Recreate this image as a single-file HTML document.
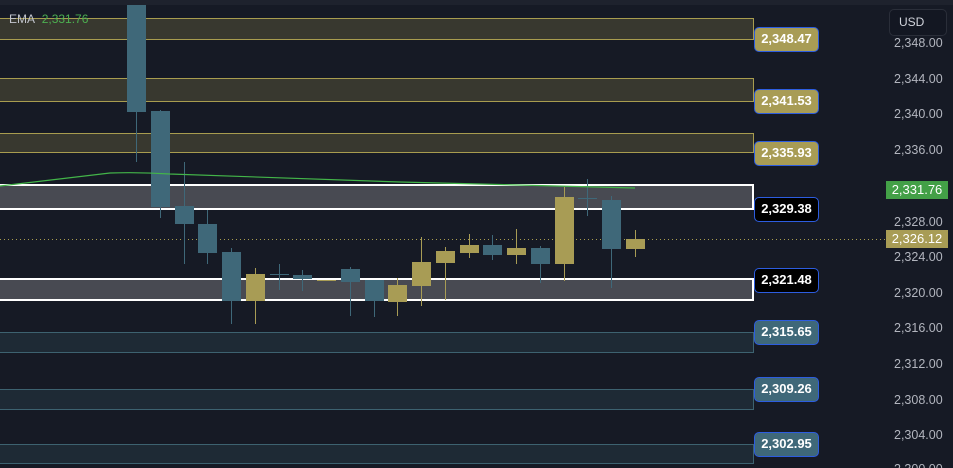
<!DOCTYPE html>
<html style="overflow:hidden;height:468px"><head><meta charset="utf-8"><style>
*{margin:0;padding:0;box-sizing:border-box}
body{width:953px;height:468px;background:#161a25;overflow:hidden;position:relative;font-family:"Liberation Sans",sans-serif}
.z{position:absolute;left:0;width:754px}
.y{background:#38382f;border-top:1px solid #a89c4f;border-bottom:1px solid #a89c4f;border-right:1px solid #a89c4f}
.g{background:#484a52;border-top:2px solid #fff;border-bottom:2px solid #fff;border-right:2px solid #fff}
.b{background:#1e2a35;border-top:1px solid #3d6270;border-bottom:1px solid #3d6270;border-right:1px solid #3d6270}
.lb{position:absolute;left:754px;width:65px;height:25px;border:1.5px solid #2d5de0;border-radius:5px;color:#fff;font-size:13px;font-weight:bold;line-height:22px;text-align:center}
.ax{position:absolute;left:894px;color:#b2b5be;font-size:12.5px}
.hl{position:absolute;left:886px;width:62px;height:18px;font-size:13px;color:#fff;line-height:18px;text-align:center}
</style></head><body>
<div style="position:absolute;left:0;top:0;width:953px;height:5px;background:#1e222d"></div>
<div class="z y" style="top:18px;height:22px"></div>
<div class="z y" style="top:78px;height:24px"></div>
<div class="z y" style="top:133px;height:20px"></div>
<div class="z g" style="top:184px;height:26px"></div>
<div class="z g" style="top:278px;height:23px"></div>
<div class="z b" style="top:332px;height:21px"></div>
<div class="z b" style="top:389px;height:21px"></div>
<div class="z b" style="top:444px;height:20px"></div>
<svg style="position:absolute;left:0;top:0" width="953" height="468">
<line x1="0" y1="239.5" x2="885" y2="239.5" stroke="#a89c4f" stroke-dasharray="1 3"/>
<g stroke-width="1">
<g fill="#3f6879" stroke="#3f6879">
<line x1="136.5" y1="5" x2="136.5" y2="162"/><rect x="127" y="5" width="19" height="107" stroke="none"/>
<line x1="160.5" y1="110" x2="160.5" y2="218"/><rect x="151" y="111" width="19" height="96" stroke="none"/>
<line x1="184.5" y1="162" x2="184.5" y2="264"/><rect x="175" y="206" width="19" height="18" stroke="none"/>
<line x1="207.5" y1="210" x2="207.5" y2="264"/><rect x="198" y="224" width="19" height="29" stroke="none"/>
<line x1="231.5" y1="248" x2="231.5" y2="324"/><rect x="222" y="252" width="19" height="49" stroke="none"/>
<line x1="279.5" y1="264" x2="279.5" y2="290"/><line x1="270" y1="274.5" x2="289" y2="274.5"/>
<line x1="302.5" y1="270" x2="302.5" y2="291"/><rect x="293" y="275" width="19" height="4" stroke="none"/>
<line x1="350.5" y1="267" x2="350.5" y2="316"/><rect x="341" y="269" width="19" height="13" stroke="none"/>
<line x1="374.5" y1="280" x2="374.5" y2="317"/><rect x="365" y="280" width="19" height="21" stroke="none"/>
<line x1="492.5" y1="235" x2="492.5" y2="260"/><rect x="483" y="245" width="19" height="10" stroke="none"/>
<line x1="540.5" y1="246" x2="540.5" y2="283"/><rect x="531" y="248" width="19" height="16" stroke="none"/>
<line x1="587.5" y1="179" x2="587.5" y2="216"/><line x1="578" y1="198.5" x2="597" y2="198.5"/>
<line x1="611.5" y1="196" x2="611.5" y2="288"/><rect x="602" y="200" width="19" height="49" stroke="none"/>
</g>
<g fill="#a89c55" stroke="#a89c55">
<line x1="255.5" y1="268" x2="255.5" y2="324"/><rect x="246" y="274" width="19" height="27" stroke="none"/>
<line x1="317" y1="280.5" x2="336" y2="280.5"/>
<line x1="397.5" y1="278" x2="397.5" y2="316"/><rect x="388" y="285" width="19" height="17" stroke="none"/>
<line x1="421.5" y1="237" x2="421.5" y2="306"/><rect x="412" y="262" width="19" height="24" stroke="none"/>
<line x1="445.5" y1="247" x2="445.5" y2="300"/><rect x="436" y="251" width="19" height="12" stroke="none"/>
<line x1="469.5" y1="234" x2="469.5" y2="258"/><rect x="460" y="245" width="19" height="8" stroke="none"/>
<line x1="516.5" y1="229" x2="516.5" y2="264"/><rect x="507" y="248" width="19" height="7" stroke="none"/>
<line x1="564.5" y1="187" x2="564.5" y2="281"/><rect x="555" y="197" width="19" height="67" stroke="none"/>
<line x1="635.5" y1="230" x2="635.5" y2="257"/><rect x="626" y="239" width="19" height="10" stroke="none"/>
</g></g>
<path d="M0 186 L110 173 Q140 172 170 174 L400 182 L635 188" fill="none" stroke="#43b549" stroke-width="1.2"/>
</svg>
<div style="position:absolute;left:9px;top:12px;font-size:12px;color:#c3c6ce">EMA <span style="color:#4caf50;margin-left:4px">2,331.76</span></div>
<div class="lb" style="top:27px;background:#a89c55">2,348.47</div>
<div class="lb" style="top:89px;background:#a89c55">2,341.53</div>
<div class="lb" style="top:141px;background:#a89c55">2,335.93</div>
<div class="lb" style="top:197px;background:#000">2,329.38</div>
<div class="lb" style="top:268px;background:#000">2,321.48</div>
<div class="lb" style="top:320px;background:#3f6879">2,315.65</div>
<div class="lb" style="top:377px;background:#3f6879">2,309.26</div>
<div class="lb" style="top:432px;background:#3f6879">2,302.95</div>
<div style="position:absolute;left:889px;top:9px;width:58px;height:27px;border:1px solid #2a2e39;border-radius:5px;background:#131722;color:#d1d4dc;font-size:12px;line-height:25px;padding-left:9px">USD</div>
<div class="ax" style="top:36px">2,348.00</div>
<div class="ax" style="top:72px">2,344.00</div>
<div class="ax" style="top:107px">2,340.00</div>
<div class="ax" style="top:143px">2,336.00</div>
<div class="ax" style="top:215px">2,328.00</div>
<div class="ax" style="top:250px">2,324.00</div>
<div class="ax" style="top:286px">2,320.00</div>
<div class="ax" style="top:321px">2,316.00</div>
<div class="ax" style="top:357px">2,312.00</div>
<div class="ax" style="top:393px">2,308.00</div>
<div class="ax" style="top:428px">2,304.00</div>
<div class="ax" style="top:462px">2,300.00</div>
<div class="hl" style="top:181px;background:#43a047">2,331.76</div>
<div class="hl" style="top:230px;background:#a89c55">2,326.12</div>
</body></html>
